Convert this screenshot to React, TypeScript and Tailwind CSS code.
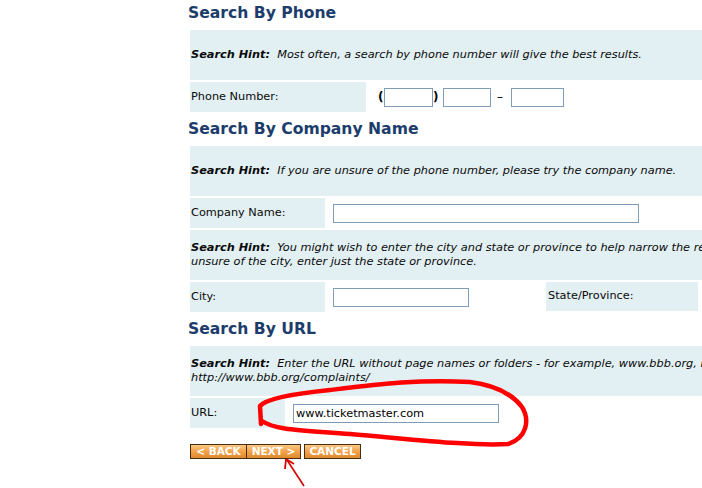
import React from 'react'

const font = { fontFamily: '"DejaVu Sans", Verdana, sans-serif' }

function Heading({ children }: { children: React.ReactNode }) {
  return (
    <div className="h-[30px] pt-[3px] text-[15.6px] leading-[20px] font-bold text-[#1c3d6b] whitespace-nowrap">
      {children}
    </div>
  )
}

function Hint({ lead, lines }: { lead: string; lines: string[] }) {
  return (
    <div className="ml-[2px] w-[560px] h-[50px] bg-[#e2f0f3] flex items-center pl-[1px]">
      <div className="text-[11.3px] leading-[14px] italic text-[#0a0a0a] whitespace-nowrap">
        <span className="font-bold">Search Hint:</span>&nbsp; {lead}
        {lines.map((l, i) => (
          <React.Fragment key={i}>
            <br />
            {l}
          </React.Fragment>
        ))}
      </div>
    </div>
  )
}

function Label({ w, children }: { w: string; children: React.ReactNode }) {
  return (
    <div className={`${w} h-[30px] bg-[#e2f0f3] flex items-center pl-[1px] text-[11.3px] text-[#0a0a0a] shrink-0`}>
      {children}
    </div>
  )
}

function Field({ w, value }: { w: string; value?: string }) {
  return (
    <div
      className={`${w} h-[19px] border border-[#7f9db9] bg-white px-[2px] text-[11.3px] leading-[17px] text-black shrink-0`}
    >
      {value}
    </div>
  )
}

function Btn({ children, className = '' }: { children: React.ReactNode; className?: string }) {
  return (
    <div
      className={`h-[15px] border border-[#4a2d10] bg-gradient-to-b from-[#fbc883] via-[#f2a24a] to-[#de8a2e] text-white font-bold text-[10.5px] leading-[13px] flex items-center justify-center ${className}`}
    >
      {children}
    </div>
  )
}

export default function App() {
  return (
    <div className="relative w-[702px] h-[488px] overflow-hidden bg-white" style={font}>
      <div className="pl-[188px]">
        <Heading>Search By Phone</Heading>
        <Hint lead="Most often, a search by phone number will give the best results." lines={[]} />
        <div className="ml-[2px] mt-[2px] flex">
          <Label w="w-[176px]">Phone Number:</Label>
          <div className="flex items-center h-[30px] pl-[12px]">
            <span className="text-[12px] font-bold w-[4px] mr-[2px]">(</span>
            <Field w="w-[49px]" />
            <span className="text-[12px] font-bold w-[4px]">)</span>
            <div className="w-[6px]" />
            <Field w="w-[48px]" />
            <span className="text-[12px] ml-[6px] mr-[8px]">–</span>
            <Field w="w-[53px]" />
          </div>
        </div>

        <div className="mt-[4px]">
          <Heading>Search By Company Name</Heading>
        </div>
        <Hint lead="If you are unsure of the phone number, please try the company name." lines={[]} />
        <div className="ml-[2px] mt-[2px] flex">
          <Label w="w-[135px]">Company Name:</Label>
          <div className="flex items-center h-[30px] pl-[8px]">
            <Field w="w-[306px]" />
          </div>
        </div>
        <div className="mt-[2px]">
          <Hint
            lead="You might wish to enter the city and state or province to help narrow the results. If you are"
            lines={['unsure of the city, enter just the state or province.']}
          />
        </div>
        <div className="ml-[2px] mt-[2px] flex">
          <Label w="w-[135px]">City:</Label>
          <div className="flex items-center h-[30px] pl-[8px] w-[221px] shrink-0">
            <Field w="w-[136px]" />
          </div>
          <div className="w-[152px] h-[29px] bg-[#e2f0f3] flex items-center pl-[2px] text-[11.3px] text-[#0a0a0a] shrink-0">
            State/Province:
          </div>
        </div>

        <div className="mt-[4px]">
          <Heading>Search By URL</Heading>
        </div>
        <Hint
          lead="Enter the URL without page names or folders - for example, www.bbb.org, not"
          lines={['http://www.bbb.org/complaints/']}
        />
        <div className="ml-[2px] mt-[2px] flex">
          <Label w="w-[95px]">URL:</Label>
          <div className="flex items-center h-[30px] pl-[8px]">
            <Field w="w-[206px]" value="www.ticketmaster.com" />
          </div>
        </div>

        <div className="ml-[2px] mt-[16px] flex">
          <Btn className="w-[57px]">&lt; BACK</Btn>
          <Btn className="w-[55px] -ml-[1px]">NEXT &gt;</Btn>
          <Btn className="w-[57px] ml-[3px]">CANCEL</Btn>
        </div>
      </div>

      <svg className="absolute left-0 top-0 pointer-events-none" width="702" height="488">
        <path
          d="M 261 424 L 260 406 C 266 399, 290 394, 330 390 C 380 384, 420 379, 470 382 C 495 385, 512 394, 522 407 C 530 420, 527 438, 508 444 C 470 446, 420 440, 350 434 C 300 430, 275 430, 262 421"
          fill="none"
          stroke="#ff0000"
          strokeWidth="4.5"
          strokeLinecap="round"
          strokeLinejoin="round"
        />
        <path d="M 304 486 L 287 460" stroke="#d40000" strokeWidth="1.6" fill="none" />
        <path d="M 286 459 L 285 469 M 286 459 L 294 464" stroke="#d40000" strokeWidth="1.8" fill="none" />
      </svg>
    </div>
  )
}
